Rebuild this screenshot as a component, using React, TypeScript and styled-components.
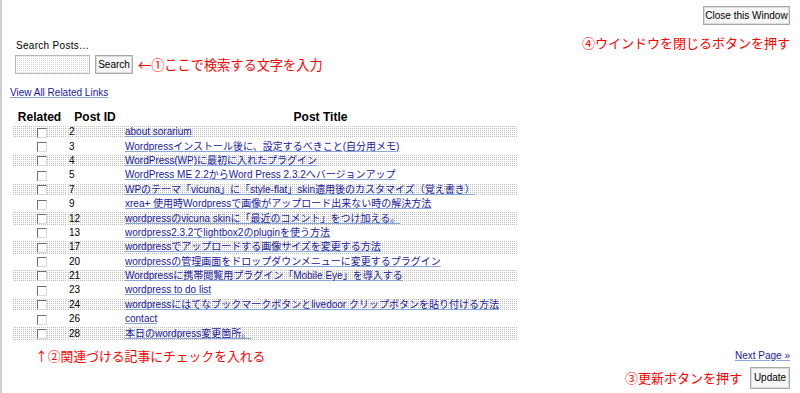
import React from "react";
import styled, { createGlobalStyle } from "styled-components";

const Global = createGlobalStyle`
  html, body { margin: 0; padding: 0; background: #fff; }
  body { font-family: "Liberation Sans", Arial, "Noto Sans CJK JP", sans-serif; color: #000; }
`;

const Page = styled.div`
  box-sizing: border-box;
  width: 800px;
  height: 393px;
  border-left: 2px solid #cfcfcf;
  padding: 6px 10px 0 8px;
  display: flex;
  flex-direction: column;
  overflow: hidden;
`;

const Top = styled.div`
  display: flex;
  justify-content: space-between;
  align-items: flex-start;
`;

const SearchBlock = styled.div`
  display: flex;
  flex-direction: column;
  padding-top: 34px;
  padding-left: 6px;
`;

const Label = styled.div`
  font-size: 10px;
  line-height: 12px;
  letter-spacing: 0.3px;
`;

const SearchRow = styled.div`
  display: flex;
  align-items: center;
  gap: 5px;
  margin-top: 3px;
  margin-left: -1px;
`;

const TextBox = styled.div`
  box-sizing: border-box;
  width: 75px;
  height: 19px;
  border: 1px solid #b8b8b8;
  background-color: #fff;
  background-image: conic-gradient(#d6d6d6 0 25%, transparent 0 100%);
  background-size: 2px 2px;
`;

const Btn = styled.button<{ $w: number; $h?: number }>`
  box-sizing: border-box;
  width: ${(p) => p.$w}px;
  height: ${(p) => p.$h ?? 19}px;
  padding: 0;
  font-family: "Liberation Sans", Arial, sans-serif;
  font-size: 10px;
  color: #000;
  background: #f6f6f6;
  border: 1px solid #a9a9a9;
  box-shadow: inset 0 0 0 1px #dcdcdc;
  cursor: default;
`;

const Note = styled.span<{ $size?: number }>`
  font-family: "Noto Sans CJK JP", sans-serif;
  font-size: ${(p) => p.$size ?? 13.2}px;
  line-height: 16px;
  color: #f00;
  white-space: nowrap;
`;

const RightBlock = styled.div`
  display: flex;
  flex-direction: column;
  align-items: flex-end;
`;

const CloseNote = styled(Note)`
  margin-top: 10px;
`;

const Link = styled.a`
  font-size: 10px;
  line-height: 12px;
  color: #1a1aa0;
  text-decoration: underline;
  text-decoration-color: #88a8dc;
  text-underline-offset: 1px;
  white-space: nowrap;
`;

const AllLink = styled(Link)`
  margin-top: 13px;
  align-self: flex-start;
`;

const Table = styled.table`
  margin-top: 10px;
  margin-left: 2px;
  width: 506px;
  border-collapse: separate;
  border-spacing: 0 2px;
  table-layout: fixed;
`;

const Th = styled.th<{ $w: number }>`
  width: ${(p) => p.$w}px;
  font-size: 12px;
  font-weight: bold;
  text-align: center;
  padding: 0;
  height: 13px;
  line-height: 13px;
`;

const Tr = styled.tr<{ $striped: boolean }>`
  & > td {
    background-color: #fff;
    background-image: ${(p) =>
      p.$striped ? "conic-gradient(#bdbdbd 0 25%, transparent 0 100%)" : "none"};
    background-size: 2px 2px;
  }
`;

const Td = styled.td<{ $align?: string }>`
  height: 12.4px;
  padding: 0 2px;
  font-size: 10px;
  line-height: 12px;
  text-align: ${(p) => p.$align ?? "left"};
  white-space: nowrap;
  overflow: hidden;
  vertical-align: middle;
  font-family: "Liberation Sans", Arial, "Noto Sans CJK JP", sans-serif;
`;

const Check = styled.span`
  display: inline-block;
  box-sizing: border-box;
  width: 10px;
  height: 10px;
  vertical-align: middle;
  background: #fff;
  border-top: 1px solid #6f6f6f;
  border-left: 1px solid #6f6f6f;
  border-right: 1px solid #d8d8d8;
  border-bottom: 1px solid #d8d8d8;
  margin-left: 4px;
`;

const Footer = styled.div`
  display: flex;
  justify-content: space-between;
  align-items: flex-start;
  margin-top: 6px;
`;

const LeftNote = styled(Note)`
  margin-left: 25px;
`;

const FootRight = styled.div`
  display: flex;
  flex-direction: column;
  align-items: flex-end;
  padding-top: 2px;
`;

const UpdateRow = styled.div`
  display: flex;
  align-items: center;
  gap: 8px;
  margin-top: 5px;
`;

const rows: [number, string][] = [
  [2, "about sorarium"],
  [3, "Wordpressインストール後に、設定するべきこと(自分用メモ)"],
  [4, "WordPress(WP)に最初に入れたプラグイン"],
  [5, "WordPress ME 2.2からWord Press 2.3.2へバージョンアップ"],
  [7, "WPのテーマ「vicuna」に「style-flat」skin適用後のカスタマイズ（覚え書き）"],
  [9, "xrea+ 使用時Wordpressで画像がアップロード出来ない時の解決方法"],
  [12, "wordpressのvicuna skinに「最近のコメント」をつけ加える。"],
  [13, "wordpress2.3.2でlightbox2のpluginを使う方法"],
  [17, "wordpressでアップロードする画像サイズを変更する方法"],
  [20, "wordpressの管理画面をドロップダウンメニューに変更するプラグイン"],
  [21, "Wordpressに携帯閲覧用プラグイン「Mobile Eye」を導入する"],
  [23, "wordpress to do list"],
  [24, "wordpressにはてなブックマークボタンとlivedoor クリップボタンを貼り付ける方法"],
  [26, "contact"],
  [28, "本日のwordpress変更箇所。"],
];

export default function App() {
  return (
    <>
      <Global />
      <Page>
        <Top>
          <SearchBlock>
            <Label>Search Posts…</Label>
            <SearchRow>
              <TextBox />
              <Btn $w={38}>Search</Btn>
              <Note>←①ここで検索する文字を入力</Note>
            </SearchRow>
          </SearchBlock>
          <RightBlock>
            <Btn $w={87}>Close this Window</Btn>
            <CloseNote $size={13}>④ウインドウを閉じるボタンを押す</CloseNote>
          </RightBlock>
        </Top>
        <AllLink href="#">View All Related Links</AllLink>
        <Table>
          <thead>
            <tr>
              <Th $w={55}>Related</Th>
              <Th $w={56}>Post ID</Th>
              <Th $w={395}>Post Title</Th>
            </tr>
          </thead>
          <tbody>
            {rows.map(([id, title], i) => (
              <Tr key={id} $striped={i % 2 === 0}>
                <Td $align="center">
                  <Check />
                </Td>
                <Td>{id}</Td>
                <Td>
                  <Link href="#">{title}</Link>
                </Td>
              </Tr>
            ))}
          </tbody>
        </Table>
        <Footer>
          <LeftNote $size={12.8}>↑②関連づける記事にチェックを入れる</LeftNote>
          <FootRight>
            <Link href="#">Next Page »</Link>
            <UpdateRow>
              <Note $size={13}>③更新ボタンを押す</Note>
              <Btn $w={40} $h={22}>Update</Btn>
            </UpdateRow>
          </FootRight>
        </Footer>
      </Page>
    </>
  );
}
